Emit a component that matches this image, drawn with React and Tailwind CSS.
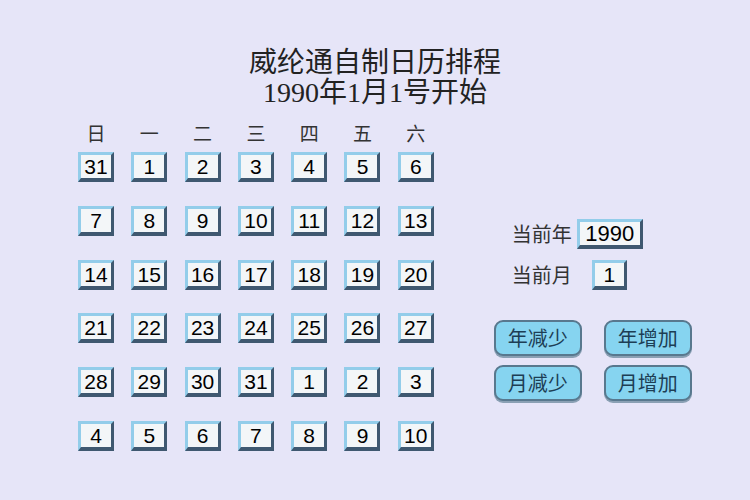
import React from 'react';

const weekdays = ['日', '一', '二', '三', '四', '五', '六'];

const days = [
  31, 1, 2, 3, 4, 5, 6,
  7, 8, 9, 10, 11, 12, 13,
  14, 15, 16, 17, 18, 19, 20,
  21, 22, 23, 24, 25, 26, 27,
  28, 29, 30, 31, 1, 2, 3,
  4, 5, 6, 7, 8, 9, 10,
];

const cjk = { fontFamily: '"Noto Sans CJK SC", sans-serif' };
const titleFont = { fontFamily: '"Liberation Serif", "Noto Sans CJK SC", serif' };
const numFont = { fontFamily: '"Liberation Sans", Arial, sans-serif' };

const Cell = ({ value, className = '' }) => (
  <div
    className={`flex items-center justify-center h-[30px] bg-[#f3f6f8] border-[3px] border-t-[#93cdea] border-l-[#93cdea] border-r-[#3f5870] border-b-[#3f5870] border-b-[4px] text-[21px] leading-none text-black ${className}`}
    style={numFont}
  >
    {value}
  </div>
);

const Button = ({ label }) => (
  <button
    className="w-[88px] h-[36px] rounded-[9px] bg-[#86d4f0] border-2 border-[#58788e] shadow-[0_2px_0_#8aa0b4] text-[20px] leading-none text-[#1d3e55] cursor-pointer"
    style={cjk}
  >
    {label}
  </button>
);

export default function App() {
  return (
    <div className="w-[750px] h-[500px] bg-[#e6e5f8] flex flex-col overflow-hidden">
      {/* Title */}
      <div className="flex flex-col items-center pt-[48px] text-[#222] text-[28px] leading-[30px]" style={titleFont}>
        <div>威纶通自制日历排程</div>
        <div>1990年1月1号开始</div>
      </div>

      <div className="flex pl-[78px] pt-[13px]">
        {/* Calendar */}
        <div className="grid grid-cols-[repeat(7,36px)] gap-x-[17.3px]">
          {weekdays.map((d) => (
            <div key={d} className="text-center text-[19px] leading-[24px] text-[#333] pb-[7px]" style={cjk}>
              {d}
            </div>
          ))}
          {days.map((d, i) => (
            <Cell key={i} value={d} className={i >= 7 ? 'mt-[23.8px]' : ''} />
          ))}
        </div>

        {/* Controls */}
        <div className="flex flex-col ml-[60px] pt-[98px]">
          <div className="flex items-center pl-[18px] gap-[5px]">
            <span className="text-[20px] leading-none text-[#333]" style={cjk}>当前年</span>
            <Cell value="1990" className="w-[66px] h-[27px] text-[22px]" />
          </div>
          <div className="flex items-center pl-[18px] gap-[20px] mt-[11px]">
            <span className="text-[20px] leading-none text-[#333]" style={cjk}>当前月</span>
            <Cell value="1" className="w-[35px] h-[28px]" />
          </div>
          <div className="grid grid-cols-[88px_88px] gap-x-[22px] gap-y-[9px] mt-[30px]">
            <Button label="年减少" />
            <Button label="年增加" />
            <Button label="月减少" />
            <Button label="月增加" />
          </div>
        </div>
      </div>
    </div>
  );
}
